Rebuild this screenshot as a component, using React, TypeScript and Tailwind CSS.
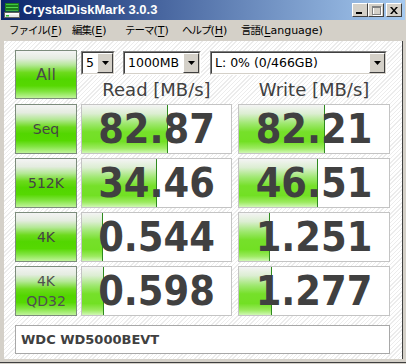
import React from "react";

const rows = [
  { label: ["Seq"], read: "82.87", write: "82.21", rw: 87, ww: 87 },
  { label: ["512K"], read: "34.46", write: "46.51", rw: 76, ww: 80 },
  { label: ["4K"], read: "0.544", write: "1.251", rw: 22, ww: 32 },
  { label: ["4K", "QD32"], read: "0.598", write: "1.277", rw: 23, ww: 34 },
];

const menu = [
  { jp: "ファイル", key: "F", post: ")", w: "w-[63px]" },
  { jp: "編集", key: "E", post: ")", w: "w-[53px]" },
  { jp: "テーマ", key: "T", post: ")", w: "w-[57px]" },
  { jp: "ヘルプ", key: "H", post: ")", w: "w-[59px]" },
  { jp: "言語", key: "L", post: "anguage)", w: "w-[90px]" },
];

function AppIcon() {
  return (
    <svg width="16" height="16" viewBox="0 0 16 16">
      <rect x="1.5" y="1.5" width="13" height="2" fill="#3cc83c" stroke="#1d7a1d" strokeWidth="1" />
      <rect x="1.5" y="4.5" width="13" height="2" fill="#52d852" stroke="#1d7a1d" strokeWidth="1" />
      <rect x="1.5" y="7.5" width="13" height="1.5" fill="#6ae06a" stroke="#1d7a1d" strokeWidth="1" />
      <rect x="0.5" y="10.5" width="15" height="5" fill="#e8e8e8" stroke="#606060" strokeWidth="1" />
      <rect x="1" y="11" width="14" height="1.5" fill="#ffffff" />
      <rect x="2" y="13" width="3" height="1.5" fill="#2fbf2f" />
    </svg>
  );
}

function TitleButton({ children, className = "" }: { children: React.ReactNode; className?: string }) {
  return (
    <div
      className={`w-[16px] h-[14px] bg-[#d4d0c8] border border-t-white border-l-white border-r-[#404040] border-b-[#404040] flex items-center justify-center ${className}`}
    >
      {children}
    </div>
  );
}

function Combo({ value, className }: { value: string; className: string }) {
  return (
    <div className={`h-[24px] border border-t-[#808080] border-l-[#808080] border-r-white border-b-white ${className}`}>
      <div className="h-full bg-white border border-t-[#404040] border-l-[#404040] border-r-[#d4d0c8] border-b-[#d4d0c8] flex items-center">
        <span className="flex-1 pl-[3px] text-[12.5px] text-black font-['DejaVu_Sans',sans-serif] whitespace-nowrap">
          {value}
        </span>
        <div className="w-[16px] h-full bg-[#d4d0c8] border border-t-white border-l-white border-r-[#404040] border-b-[#404040] flex items-center justify-center">
          <svg width="7" height="4" viewBox="0 0 7 4">
            <polygon points="0,0 7,0 3.5,4" fill="#000" />
          </svg>
        </div>
      </div>
    </div>
  );
}

const greenButton =
  "bg-[linear-gradient(to_bottom,#f4f4f4_0%,#e4ece0_16%,#b4e896_30%,#6cda1c_46%,#52d600_60%,#56d802_74%,#80e440_86%,#c0f49a_100%)]";
const greenBar =
  "bg-[linear-gradient(to_bottom,#f4f4f4_0%,#dceed2_18%,#a0e872_38%,#76e02a_56%,#72e024_76%,#9cea60_90%,#d0f8b4_100%)]";

function Label({ lines }: { lines: string[] }) {
  const multi = lines.length > 1;
  return (
    <div
      className={`w-[62px] h-[50px] border border-[#7c8c7c] ${greenButton} flex flex-col items-center justify-center font-['DejaVu_Sans',sans-serif] text-[14px] ${
        multi ? "text-[#505050] leading-[20px]" : "text-[#444] leading-none"
      }`}
    >
      {lines.map((l) => (
        <span key={l}>{l}</span>
      ))}
    </div>
  );
}

function Result({ value, bar, className }: { value: string; bar: number; className: string }) {
  return (
    <div className={`relative h-[50px] border border-[#c4c4c4] bg-white flex items-center justify-center ${className}`}>
      <div
        className={`absolute left-0 top-0 bottom-0 ${greenBar} border-r border-[#2e8a1e]`}
        style={{ width: bar - 1 }}
      />
      <span className="relative text-[41px] leading-none font-bold text-[#404040] font-['DejaVu_Sans_Condensed','DejaVu_Sans',sans-serif] [font-stretch:condensed]">
        {value}
      </span>
    </div>
  );
}

export default function App() {
  return (
    <div className="w-[406px] h-[364px] bg-[#d4d0c8] flex flex-col overflow-hidden select-none">
      {/* title bar */}
      <div className="h-[20px] mx-[1px] flex items-center bg-[linear-gradient(to_right,#0a246a,#a6caf0)]">
        <div className="ml-[3px] mr-[3px]">
          <AppIcon />
        </div>
        <span className="text-white font-bold text-[13px] font-['Liberation_Sans',Arial,sans-serif] whitespace-nowrap">
          CrystalDiskMark 3.0.3
        </span>
        <div className="ml-auto mr-[3px] flex items-center">
          <TitleButton>
            <div className="w-[6px] h-[2px] bg-black mt-[6px] mr-[2px]" />
          </TitleButton>
          <TitleButton>
            <div className="relative w-[9px] h-[9px]">
              <div className="absolute left-[1px] top-[1px] w-[9px] h-[9px] border border-white" />
              <div className="absolute left-0 top-0 w-[9px] h-[9px] border border-[#808080] border-t-2" />
            </div>
          </TitleButton>
          <TitleButton className="ml-[2px]">
            <svg width="8" height="7" viewBox="0 0 8 7">
              <path d="M0 0h2l2 2.5L6 0h2L5 3.5 8 7H6L4 4.5 2 7H0l3-3.5z" fill="#000" />
            </svg>
          </TitleButton>
        </div>
      </div>

      {/* menu bar */}
      <div className="h-[19px] mt-[1px] pl-[9px] flex items-center text-[11px] text-black font-['DejaVu_Sans','Noto_Sans_CJK_JP',sans-serif]">
        {menu.map((m) => (
          <div key={m.key} className={`${m.w} whitespace-nowrap`}>
            <span className="text-[10.5px] tracking-[-1px] font-['Noto_Sans_CJK_JP',sans-serif]">{m.jp}</span>
            (<span className="underline underline-offset-2">{m.key}</span>
            {m.post}
          </div>
        ))}
      </div>

      {/* client area */}
      <div className="mt-[1px] ml-[4px] mr-[1px] w-[399px] h-[318px] bg-[repeating-linear-gradient(135deg,#ffffff_0px,#ffffff_2px,#ececec_2px,#ececec_3px)] border-r border-[#404040] pl-[11px] pt-[9px] flex flex-col">
        <div className="flex items-start gap-[4px]">
          <div
            className={`w-[62px] h-[49px] border border-[#7c8c7c] ${greenButton} flex items-center justify-center text-[16px] text-[#4a4a4a] font-['DejaVu_Sans',sans-serif]`}
          >
            All
          </div>
          <div className="flex flex-col mt-[1px]">
            <div className="flex items-center">
              <Combo value="5" className="w-[34px]" />
              <Combo value="1000MB" className="w-[78px] ml-[8px]" />
              <Combo value="L: 0% (0/466GB)" className="w-[177px] ml-[9px]" />
            </div>
            <div className="h-[29px] flex items-center text-[18px] text-[#404040] font-['DejaVu_Sans',sans-serif]">
              <div className="w-[151px] text-center">Read [MB/s]</div>
              <div className="w-[152px] ml-[6px] text-center">Write [MB/s]</div>
            </div>
          </div>
        </div>

        <div className="flex flex-col gap-[4px]">
          {rows.map((r) => (
            <div key={r.read} className="flex">
              <Label lines={r.label} />
              <Result value={r.read} bar={r.rw} className="w-[151px] ml-[4px]" />
              <Result value={r.write} bar={r.ww} className="w-[152px] ml-[6px]" />
            </div>
          ))}
        </div>

        <div className="mt-[9px] w-[375px] h-[29px] bg-white border border-[#a8a8a8] flex items-center pl-[5px] text-[13px] font-bold text-[#404040] font-['DejaVu_Sans',sans-serif]">
          WDC WD5000BEVT
        </div>
      </div>

      <div className="mt-[3px] h-[1px] bg-[#404040]" />
    </div>
  );
}
